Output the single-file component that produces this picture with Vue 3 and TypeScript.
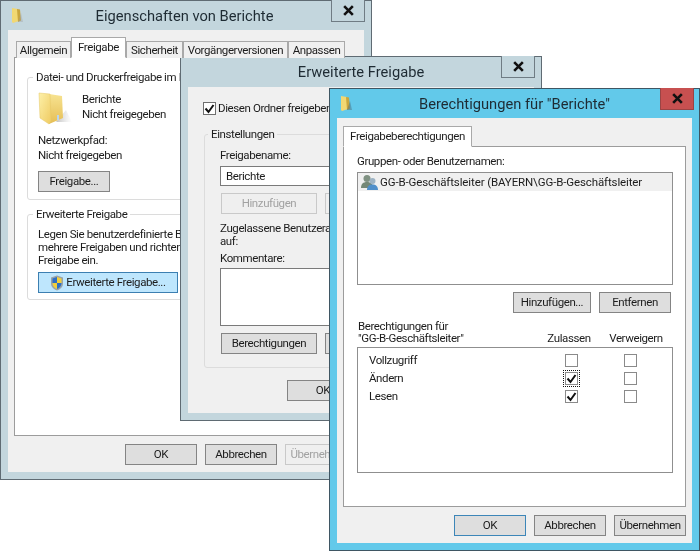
<script setup lang="ts">
interface Tab { label: string; width: number; active?: boolean }
interface PermRow { name: string; allow: boolean; focus?: boolean }

const tabs: Tab[] = [
  { label: 'Allgemein', width: 55 },
  { label: 'Freigabe', width: 55, active: true },
  { label: 'Sicherheit', width: 57 },
  { label: 'Vorgängerversionen', width: 105 },
  { label: 'Anpassen', width: 57 },
]
const rows: PermRow[] = [
  { name: 'Vollzugriff', allow: false },
  { name: 'Ändern', allow: true, focus: true },
  { name: 'Lesen', allow: true },
]
</script>

<template>
  <div class="desk">
    <!-- Window 1 -->
    <section class="win win-a">
      <header class="bar">
        <svg class="mini" viewBox="0 0 14 16"><path d="M2 1l6 1 1 12-6 2-1-1z" fill="#f1d873"/><path d="M7 2l3 .5 1 11-3 1.5z" fill="#c9a63e"/><path d="M11 6l2 9-5 0z" fill="#9a9a9a" opacity=".35"/></svg>
        <h1>Eigenschaften von Berichte</h1>
        <button class="close"><svg viewBox="0 0 12 10"><path d="M2 1l8 8M10 1l-8 8" stroke="#111" stroke-width="2.4"/></svg></button>
      </header>
      <div class="client">
        <nav class="tabs tabs-a">
          <span v-for="t in tabs" :key="t.label" class="tab" :class="{ on: t.active }" :style="{ width: t.width + 'px' }">{{ t.label }}</span>
        </nav>
        <div class="panel">
          <fieldset class="group g1">
            <legend>Datei- und Druckerfreigabe im Netzwerk</legend>
            <div class="share">
              <svg class="bigfolder" viewBox="0 0 36 36">
                <defs>
                  <linearGradient id="fa" x1="0" y1="0" x2="1" y2="1"><stop offset="0" stop-color="#fdf0a8"/><stop offset="1" stop-color="#efcb62"/></linearGradient>
                  <linearGradient id="fb" x1="0" y1="0" x2="0" y2="1"><stop offset="0" stop-color="#f7e391"/><stop offset="1" stop-color="#e5be55"/></linearGradient>
                  <linearGradient id="fs" x1="0" y1="0" x2="1" y2="0"><stop offset="0" stop-color="#9a9a9a" stop-opacity=".6"/><stop offset="1" stop-color="#bbb" stop-opacity="0"/></linearGradient>
                </defs>
                <path d="M20 32l10-12 6 12z" fill="url(#fs)"/>
                <path d="M13 4l13 2 1 22-14 6z" fill="url(#fb)"/>
                <path d="M3 3l11 1 1 27-2 3-9-6z" fill="url(#fa)" stroke="#e4c767" stroke-width=".5"/>
                <rect x="21" y="25" width="2" height="5" fill="#b9d4ef"/>
              </svg>
              <div class="lines">
                <p>Berichte</p>
                <p>Nicht freigegeben</p>
              </div>
            </div>
            <p class="net">Netzwerkpfad:</p>
            <p>Nicht freigegeben</p>
            <button class="btn freig">Freigabe...</button>
          </fieldset>
          <fieldset class="group g2">
            <legend>Erweiterte Freigabe</legend>
            <p class="tight">Legen Sie benutzerdefinierte Berechtigungen fest, erstellen Sie</p>
            <p class="tight">mehrere Freigaben und richten Sie andere erweiterte</p>
            <p class="tight">Freigabe ein.</p>
            <button class="btn adv">
              <svg class="shield" viewBox="0 0 14 16">
                <path d="M7 .5l6 2v6c0 3.5-3 6-6 7-3-1-6-3.500-6-7v-6z" fill="#9aa3a8"/>
                <path d="M7 2L2.500 3.500V8H7z" fill="#2f6fc4"/>
                <path d="M7 2l4.500 1.500V8H7z" fill="#f3cf3a"/>
                <path d="M2.500 8H7v6c-2-.8-4.500-2.800-4.500-6z" fill="#f3cf3a"/>
                <path d="M11.500 8H7v6c2-.8 4.500-2.800 4.500-6z" fill="#2f6fc4"/>
              </svg>
              Erweiterte Freigabe...
            </button>
          </fieldset>
        </div>
        <footer class="foot foot-a">
          <button class="btn act">OK</button>
          <button class="btn act">Abbrechen</button>
          <button class="btn act off">Übernehmen</button>
        </footer>
      </div>
    </section>

    <!-- Window 2 -->
    <section class="win win-b">
      <header class="bar">
        <h1>Erweiterte Freigabe</h1>
        <button class="close"><svg viewBox="0 0 12 10"><path d="M2 1l8 8M10 1l-8 8" stroke="#111" stroke-width="2.4"/></svg></button>
      </header>
      <div class="client body-b">
        <label class="chk-row">
          <span class="cb heavy"><svg viewBox="0 0 13 13"><path d="M2.500 6.500l3 3.500 5-7" fill="none" stroke="#111" stroke-width="2"/></svg></span>
          Diesen Ordner freigeben
        </label>
        <fieldset class="group g3">
          <legend>Einstellungen</legend>
          <p>Freigabename:</p>
          <div class="input">Berichte</div>
          <div class="pair">
            <button class="btn wide off">Hinzufügen</button>
            <button class="btn wide off">Entfernen</button>
          </div>
          <p class="tight zu">Zugelassene Benutzeranzahl einschränken</p>
          <p class="tight">auf:</p>
          <p class="tight ko">Kommentare:</p>
          <div class="area"></div>
          <div class="pair perm">
            <button class="btn wide">Berechtigungen</button>
            <button class="btn wide cache">Zwischenspeichern</button>
          </div>
        </fieldset>
        <footer class="foot-b">
          <button class="btn act">OK</button>
        </footer>
      </div>
    </section>

    <!-- Window 3 -->
    <section class="win win-c">
      <header class="bar">
        <svg class="mini" viewBox="0 0 14 16"><path d="M2 1l6 1 1 12-6 2-1-1z" fill="#f1d873"/><path d="M7 2l3 .5 1 11-3 1.500z" fill="#c9a63e"/><path d="M11 6l2 9-5 0z" fill="#4a6a7a" opacity=".45"/></svg>
        <h1>Berechtigungen für "Berichte"</h1>
        <button class="close red"><svg viewBox="0 0 12 10"><path d="M2 1l8 8M10 1l-8 8" stroke="#111" stroke-width="2.4"/></svg></button>
      </header>
      <div class="client">
        <nav class="tabs tabs-c">
          <span class="tab on solo">Freigabeberechtigungen</span>
        </nav>
        <div class="panel panel-c">
          <p class="grp-lbl">Gruppen- oder Benutzernamen:</p>
          <div class="list">
            <div class="item">
              <svg class="users" viewBox="0 0 18 16">
                <circle cx="6" cy="4.500" r="3.500" fill="#7f9182"/>
                <path d="M0 14c0-4 2-6 6-6s6 2 6 6z" fill="#748877"/>
                <circle cx="11.500" cy="7" r="3" fill="#9db3c4"/>
                <path d="M6 16c0-3.500 2-5.500 5.500-5.500S17 12.500 17 16z" fill="#4f8fca"/>
              </svg>
              <span class="item-text">GG-B-Geschäftsleiter (BAYERN\GG-B-Geschäftsleiter</span>
            </div>
          </div>
          <div class="list-btns">
            <button class="btn add">Hinzufügen...</button>
            <button class="btn rem">Entfernen</button>
          </div>
          <div class="perm-head">
            <div class="perm-title"><p>Berechtigungen für</p><p>"GG-B-Geschäftsleiter"</p></div>
            <span class="col c1">Zulassen</span>
            <span class="col c2">Verweigern</span>
          </div>
          <div class="perm-box">
            <div v-for="r in rows" :key="r.name" class="perm-row">
              <span>{{ r.name }}</span>
              <span class="cb" :class="{ focus: r.focus }">
                <svg v-if="r.allow" viewBox="0 0 13 13"><path d="M2.500 6.500l3 3.500 5-7" fill="none" stroke="#111" stroke-width="2"/></svg>
              </span>
              <i></i>
              <span class="cb"></span>
            </div>
          </div>
        </div>
        <footer class="foot foot-c">
          <button class="btn act def">OK</button>
          <button class="btn act">Abbrechen</button>
          <button class="btn act">Übernehmen</button>
        </footer>
      </div>
    </section>
  </div>
</template>

<style scoped>
.desk { position: relative; width: 700px; height: 551px; overflow: hidden; background: #fff; font: 11.500px/15px Roboto, "Liberation Sans", sans-serif; letter-spacing: -0.4px; color: #1c1c1c; filter: blur(0.35px); }
p { margin: 0; white-space: nowrap; }
.win { position: absolute; box-sizing: border-box; display: flex; flex-direction: column; border: 1px solid #5f6b73; background: #c3d6dd; padding: 0 7px 7px; }
.win-a { left: 0; top: 0; width: 372px; height: 480px; }
.win-b { left: 180px; top: 56px; width: 362px; height: 365px; }
.win-c { left: 329px; top: 88px; width: 371px; height: 463px; background: #62c9ea; border-color: #3f5663; }
.bar { flex: none; height: 29px; display: flex; align-items: center; justify-content: center; position: relative; }
.win-b .bar { height: 30px; }
.win-a .bar { padding-right: 3px; }
.bar h1 { margin: 0; font-size: 14.700px; font-weight: 400; letter-spacing: 0; color: #1e2b33; padding-top: 1px; }
.mini { position: absolute; left: 2px; top: 6px; width: 14px; height: 16px; }
.close { position: absolute; top: -1px; right: -1px; width: 34px; height: 22px; padding: 0; border: 1px solid #6f7c84; border-top: none; background: #c3d6dd; display: flex; align-items: center; justify-content: center; }
.win-c .close { right: -2px; }
.close svg { width: 13px; height: 11px; }
.close.red { background: #c75050; border-color: #9b4444; }
.client { flex: 1; display: flex; flex-direction: column; background: #f0f0f0; min-height: 0; }
.tabs { flex: none; display: flex; height: 21px; padding-left: 8px; margin-top: 7px; margin-bottom: -1px; position: relative; z-index: 1; }
.tabs-c { padding-left: 6px; margin-top: 8px; }
.tab { box-sizing: border-box; margin-top: 4px; height: 17px; border: 1px solid #a9a9a9; border-bottom: none; background: #f0f0f0; display: flex; align-items: center; justify-content: center; white-space: nowrap; }
.tab.on { margin: 0; height: 21px; background: #fff; border-bottom: 1px solid #fff; padding-bottom: 1px; }
.tab.solo { width: 129px; }
.panel { flex: 1; min-height: 0; margin: 0 6px; border: 1px solid #9c9c9c; background: #fff; display: flex; flex-direction: column; align-items: flex-start; }
.foot { flex: none; display: flex; justify-content: flex-end; gap: 8px; padding: 8px 7px 7px 0; }
.foot-c { padding-right: 6px; }
.btn { box-sizing: border-box; padding: 0; height: 21px; border: 1px solid #848484; background: #dedede; font: inherit; letter-spacing: inherit; color: #1c1c1c; display: inline-flex; align-items: center; justify-content: center; white-space: nowrap; }
.act { width: 72px; }
.off { color: #a2a2a2; border-color: #c9c9c9; background: #efefef; }
.def { border-color: #3d86b8; }
.group { box-sizing: border-box; margin: 0; min-width: 0; border: 1px solid #dcdcdc; border-radius: 3px; }
.group legend { padding: 0 3px; margin-left: -5px; line-height: 16px; white-space: nowrap; }
.g1 { margin: 11px 0 0 12px; width: 330px; padding: 5px 10px 7px; }
.share { display: flex; height: 36px; }
.bigfolder { width: 36px; height: 36px; margin-left: -2px; }
.lines { margin: 2px 0 0 10px; }
.net { margin-top: 7px; }
.freig { width: 72px; margin-top: 8px; }
.g2 { margin: 6px 0 0 12px; width: 330px; padding: 6px 10px 4px; }
.tight { line-height: 13px; }
.adv { width: 140px; margin-top: 5px; gap: 2px; background: #bee6fd; border-color: #3c7fb1; }
.shield { width: 14px; height: 16px; }
.body-b { padding-top: 15px; padding-left: 15px; }
.chk-row { display: flex; align-items: center; gap: 2px; height: 13px; }
.cb { box-sizing: border-box; width: 13px; height: 13px; border: 1px solid #8a8a8a; background: #fff; display: block; position: relative; }
.cb svg { position: absolute; left: -1px; top: -1px; width: 13px; height: 13px; }
.cb.heavy { border-color: #6f6f6f; }
.cb.focus { outline: 1px dotted #111; outline-offset: 1px; }
.g3 { margin: 11px 0 0 1px; width: 310px; padding: 6px 15px 13px; }
.g3 legend { margin-left: -12px; }
.input { box-sizing: border-box; margin-top: 3px; height: 20px; border: 1px solid #7a7a7a; background: #fff; padding-left: 5px; line-height: 18px; }
.pair { display: flex; gap: 8px; margin: 7px 0 0 1px; }
.wide { width: 96px; flex: none; }
.cache { width: 112px; }
.zu { margin-top: 8px; }
.ko { margin-top: 4px; }
.area { margin-top: 3px; height: 58px; box-sizing: border-box; border: 1px solid #7a7a7a; background: #fff; }
.perm { margin-top: 7px; }
.foot-b { margin: 12px 0 0 84px; display: flex; }
.panel-c { padding: 7px 0 0 13px; }
.grp-lbl { line-height: 15px; height: 18px; }
.list { box-sizing: border-box; width: 316px; height: 113px; border: 1px solid #8f8f8f; background: #fff; }
.item { height: 18px; background: #f0f0f0; display: flex; align-items: center; gap: 1px; padding-left: 3px; white-space: nowrap; }
.item-text { letter-spacing: -0.12px; }
.users { width: 18px; height: 16px; flex: none; }
.list-btns { display: flex; gap: 8px; margin: 7px 0 0 156px; }
.add { width: 78px; }
.rem { width: 72px; }
.perm-head { display: flex; margin-top: 5px; height: 26px; align-items: flex-end; }
.perm-title { width: 177px; padding-left: 1px; box-sizing: border-box; }
.perm-title p { line-height: 12px; }
.col { text-align: center; white-space: nowrap; line-height: 12px; }
.c1 { width: 70px; }
.c2 { width: 64px; }
.perm-box { box-sizing: border-box; margin-top: 3px; width: 316px; height: 126px; border: 1px solid #8f8f8f; background: #fff; padding: 3px 0 0 11px; }
.perm-row { display: grid; grid-template-columns: 196px 13px 46px 13px; align-items: center; height: 18px; }
</style>
